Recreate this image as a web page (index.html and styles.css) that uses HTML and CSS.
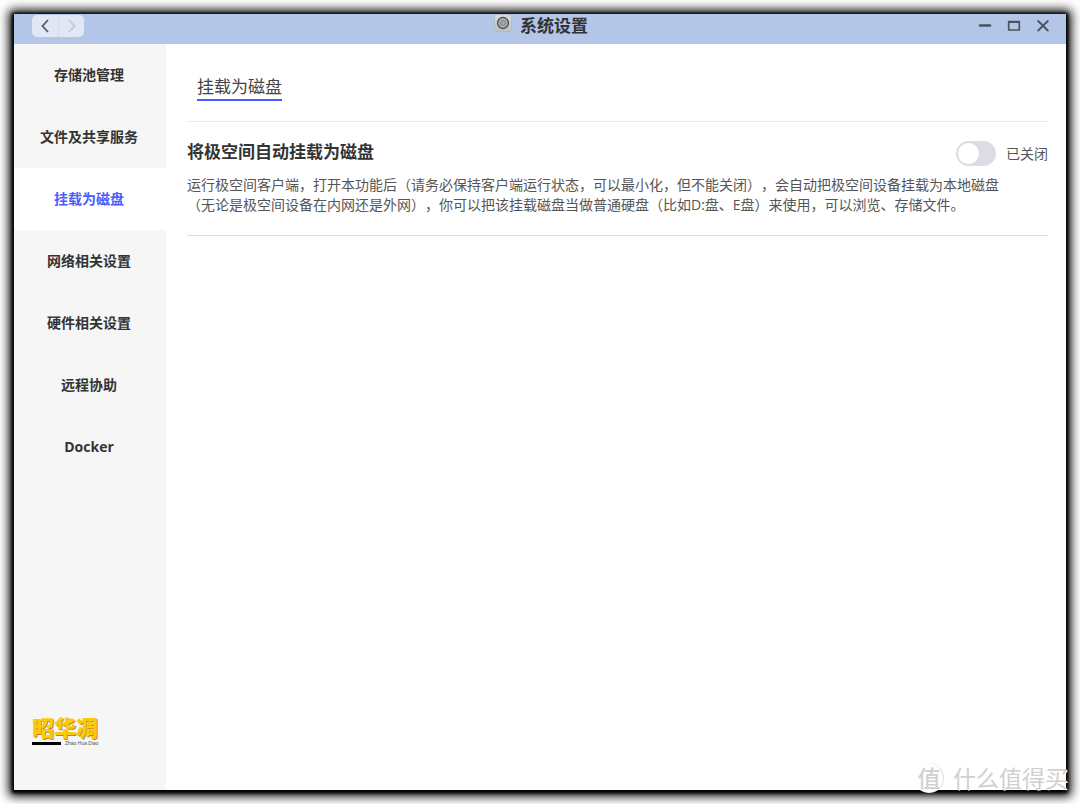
FILE: index.html
```
<!DOCTYPE html>
<html lang="zh-CN">
<head>
<meta charset="utf-8">
<title>系统设置</title>
<link rel="stylesheet" href="styles.css">
</head>
<body>
<div class="window">
  <header class="titlebar">
    <div class="history">
      <button class="history-btn" type="button" aria-label="后退">
        <svg width="8" height="14" viewBox="0 0 8 14"><path d="M7 1 1.500 7 7 13" fill="none" stroke="#555a63" stroke-width="1.800"/></svg>
      </button>
      <button class="history-btn" type="button" aria-label="前进" disabled>
        <svg width="8" height="14" viewBox="0 0 8 14"><path d="M1 1 6.500 7 1 13" fill="none" stroke="#c6c9d0" stroke-width="1.800"/></svg>
      </button>
    </div>
    <h1 class="app-title">
      <svg width="18" height="18" viewBox="0 0 18 18">
        <defs><linearGradient id="tile" x1="0" y1="0" x2="0" y2="1"><stop offset="0" stop-color="#dadddf"/><stop offset="1" stop-color="#bcc0c5"/></linearGradient></defs>
        <rect x="0.500" y="0.500" width="17" height="17" rx="2.500" fill="url(#tile)" stroke="#a9b1bf" stroke-width="0.500"/>
        <circle cx="9" cy="9" r="5.400" fill="#c3c5c7" stroke="#4b4f54" stroke-width="1.500"/>
        <circle cx="9" cy="9" r="3.600" fill="#8b8e91"/>
        <path d="M9 6v6M6.400 7.500l5.200 3M6.400 10.500l5.200-3" stroke="#adb0b3" stroke-width="0.700"/>
      </svg>
      <span>系统设置</span>
    </h1>
    <div class="controls">
      <button type="button" aria-label="最小化"><svg width="14" height="14" viewBox="0 0 14 14"><path d="M2 6.500h10" stroke="#4a525f" stroke-width="2.500" stroke-linecap="round"/></svg></button>
      <button type="button" aria-label="最大化"><svg width="14" height="14" viewBox="0 0 14 14"><path d="M1.700 2.500h10.600v8.500H1.700z" fill="none" stroke="#4a525f" stroke-width="1.700" stroke-linejoin="round"/><path d="M1.500 3h11" stroke="#4a525f" stroke-width="2"/></svg></button>
      <button type="button" aria-label="关闭"><svg width="14" height="14" viewBox="0 0 14 14"><path d="M2.200 2l9.600 9.500M11.800 2 2.200 11.500" stroke="#4a525f" stroke-width="1.800" stroke-linecap="round"/></svg></button>
    </div>
  </header>
  <div class="body">
    <aside class="sidebar">
      <nav class="nav">
        <a href="#">存储池管理</a>
        <a href="#">文件及共享服务</a>
        <a href="#" class="active" aria-current="page">挂载为磁盘</a>
        <a href="#">网络相关设置</a>
        <a href="#">硬件相关设置</a>
        <a href="#">远程协助</a>
        <a href="#">Docker</a>
      </nav>
      <div class="brand">
        <div class="brand-name">昭华凋</div>
        <div class="brand-sub"><span class="brand-bar"></span><span>Zhao Hua Diao</span></div>
      </div>
    </aside>
    <main class="content">
      <div class="tabs"><a class="tab" href="#">挂载为磁盘</a></div>
      <section class="setting">
        <div class="setting-head">
          <h2>将极空间自动挂载为磁盘</h2>
          <label class="switch"><input type="checkbox" role="switch"><span>已关闭</span></label>
        </div>
        <p>运行极空间客户端，打开本功能后（请务必保持客户端运行状态，可以最小化，但不能关闭），会自动把极空间设备挂载为本地磁盘<br>（无论是极空间设备在内网还是外网），你可以把该挂载磁盘当做普通硬盘（比如D:盘、E盘）来使用，可以浏览、存储文件。</p>
      </section>
    </main>
  </div>
  <div class="watermark"><span class="watermark-logo">值</span><span>什么值得买</span></div>
</div>
</body>
</html>
```
FILE: styles.css
```
* { box-sizing: border-box; }
body {
  margin: 0;
  min-height: 100vh;
  padding: 14px;
  display: flex;
  background: #fff;
  color: #333;
  font-family: "Open Sans", "Noto Sans CJK SC", sans-serif;
  font-size: 14px;
  text-spacing-trim: space-all;
}
a { color: inherit; text-decoration: none; }
h1, h2, p { margin: 0; }
button { padding: 0; border: 0; background: none; display: grid; place-items: center; }
svg { display: block; }

.window {
  position: relative;
  flex: 1;
  display: flex;
  flex-direction: column;
  background: #fff;
  box-shadow: 0 1px 10px 5px #000, 0 1px 3px 2px #000;
}
.titlebar {
  display: grid;
  grid-template-columns: 1fr auto 1fr;
  align-items: start;
  height: 30px;
  padding: 0 16px 0 18px;
  background: #b4c6e8;
}
.history {
  display: flex;
  justify-self: start;
  margin-top: 1px;
  border-radius: 5px;
  background: #e1e8f5;
}
.history-btn { width: 26px; height: 22px; }
.history-btn + .history-btn { border-left: 1px solid #d5dded; }
.app-title {
  display: flex;
  gap: 8px;
  font-size: 17px;
  line-height: 24px;
}
.controls {
  display: flex;
  justify-self: end;
  gap: 15px;
  margin-top: 5px;
}
.body { flex: 1; display: flex; }
.sidebar {
  width: 152px;
  flex: none;
  display: flex;
  flex-direction: column;
  justify-content: space-between;
  background: #f6f6f6;
}
.nav { display: flex; flex-direction: column; }
.nav a {
  padding-right: 2px;
  line-height: 62px;
  text-align: center;
  font-weight: 700;
}
.nav .active { background: #fff; color: #4a5bff; }
.brand { padding: 0 18px 44px; }
.brand-name {
  color: #fccb08;
  font-size: 22px;
  font-weight: 900;
  line-height: 26px;
  text-shadow: 1px 1px 0 #b8862b;
}
.brand-sub {
  display: flex;
  align-items: center;
  gap: 4px;
  color: #555;
  font-family: "Liberation Sans", sans-serif;
  font-size: 5px;
  line-height: 6px;
}
.brand-bar { width: 29px; height: 3px; background: #000; }

.content { flex: 1; padding: 0 18px 0 21px; }
.tabs {
  display: flex;
  height: 78px;
  padding: 30px 10px 20px;
  border-bottom: 1px solid #ebebeb;
}
.tab {
  height: 27px;
  border-bottom: 2px solid #4a5bff;
  color: #444;
  font-size: 17px;
  line-height: 25px;
}
.setting { padding: 18px 0 20px; border-bottom: 1px solid #ddd; }
.setting-head {
  display: flex;
  justify-content: space-between;
  align-items: flex-start;
  height: 35px;
}
.setting h2 { font-size: 17px; line-height: 24px; }
.switch {
  display: flex;
  align-items: center;
  gap: 10px;
  padding-top: 1px;
  font-size: 14px;
  line-height: 25px;
  color: #555;
}
.switch input {
  appearance: none;
  width: 40px;
  height: 25px;
  margin: 0;
  padding: 2px;
  border-radius: 13px;
  background: #dcdde4;
}
.switch input::before {
  content: "";
  display: block;
  width: 21px;
  height: 21px;
  border-radius: 50%;
  background: #fff;
}
.switch input:checked { background: #4a5bff; }
.switch input:checked::before { margin-left: 15px; }
.setting p { color: #555; line-height: 20px; white-space: nowrap; }

.watermark {
  position: absolute;
  right: -2px;
  bottom: -3px;
  display: flex;
  align-items: center;
  gap: 9px;
  color: #d0d0d0;
  font-size: 23px;
  line-height: 30px;
  text-shadow: 1px 1px 0 #fff;
}
.watermark-logo {
  width: 30px;
  height: 30px;
  border-radius: 50%;
  background: #fff;
  box-shadow: inset -1px 0 1px #ddd;
  text-align: center;
  font-weight: 500;
}
```
